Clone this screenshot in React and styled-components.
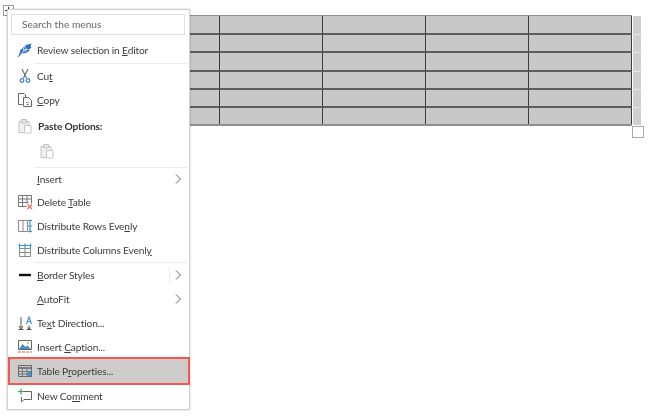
import React from 'react'
import styled, { createGlobalStyle } from 'styled-components'

const GlobalStyle = createGlobalStyle`
  html, body {
    margin: 0;
    padding: 0;
    background: #fff;
    width: 650px;
    height: 418px;
    overflow: hidden;
  }
  #root { height: 418px; }
`

const Page = styled.div`
  position: relative;
  width: 650px;
  height: 418px;
  padding: 15px 0 0 117px;
  box-sizing: border-box;
  font-family: Lato, Roboto, sans-serif;
  filter: blur(0.35px);
`

const TableArea = styled.div`
  display: flex;
  align-items: flex-start;
`

const Grid = styled.div`
  display: grid;
  grid-template-columns: repeat(5, 103px);
  grid-template-rows: 19px 18px 19px 18px 18px 16px;
  width: 515px;
  background: #c8c8c8;
  border: solid #8e8e8e;
  border-width: 1px 0 2px 0;
  box-sizing: border-box;
`

const Cell = styled.div`
  border-right: 1px solid #3c3c3c;
  border-bottom: ${p => (p.$last ? 'none' : '2px solid #5c5c5c')};
  box-sizing: border-box;
`

const EndMarks = styled.div`
  display: grid;
  grid-template-rows: 18px 17px 18px 17px 17px 17px;
  gap: 1px;
  margin: 1px 0 0 1px;
  background: #e6e6e6;
`

const EndMark = styled.div`
  width: 8px;
  background: #cfcfcf;
`

const ResizeHandle = styled.div`
  position: absolute;
  left: 632px;
  top: 126px;
  width: 10px;
  height: 10px;
  border: 1px solid #a8a8a8;
  background: #fff;
`

const MoveHandle = styled.div`
  position: absolute;
  left: 3px;
  top: 5px;
  width: 9px;
  height: 9px;
  border: 1px solid #9a9a9a;
  background: #fff;
  display: flex;
  align-items: center;
  justify-content: center;
`

const Menu = styled.div`
  position: absolute;
  left: 7px;
  top: 9px;
  width: 183px;
  height: 401px;
  box-sizing: border-box;
  background: #fff;
  border: 1px solid #d0d0d0;
  box-shadow: 0 0 2px rgba(0, 0, 0, 0.22);
  padding: 4px 1px 0 0;
  color: #3c3c3c;
  font-size: 10.2px;
  letter-spacing: -0.15px;
`

const Search = styled.div`
  height: 21px;
  margin: 0 3px 2px;
  padding: 0 0 2px 10px;
  box-sizing: border-box;
  display: flex;
  align-items: center;
  border: 1px solid #dedede;
  color: #666;
  letter-spacing: 0;
`

const Row = styled.div`
  height: ${p => p.$h || 24}px;
  display: grid;
  grid-template-columns: 29px 1fr 14px;
  align-items: center;
  box-sizing: border-box;
  ${p => p.$selected && `
    position: relative;
    height: 28px;
    margin: -2px 0 -1px 0;
    width: 182px;
    background: #cdcccb;
    border: 2px solid #f2594e;
    grid-template-columns: 27px 1fr 14px;
  `}
`

const IconSlot = styled.div`
  display: flex;
  justify-content: center;
  padding-left: ${p => (p.$selected ? 2 : 5)}px;
`

const Label = styled.span`
  white-space: nowrap;
  font-weight: ${p => (p.$bold ? 700 : 400)};
  padding-left: ${p => (p.$bold ? 1 : 0)}px;
  color: ${p => (p.$bold ? '#333' : 'inherit')};

  u {
    text-decoration-thickness: 1px;
    text-underline-offset: 1px;
  }
`

const ArrowCell = styled.div`
  position: relative;
  padding-left: 1px;

  ${p => p.$split && `
    &::before {
      content: '';
      position: absolute;
      left: -5px;
      top: -3px;
      width: 1px;
      height: 16px;
      background: #ececec;
    }
  `}
`

const Separator = styled.div`
  height: 1px;
  margin: ${p => p.$m || '0'};
  margin-left: 26px;
  background: #ececec;
`

const PasteRow = styled.div`
  height: 22px;
  padding-left: 31px;
  display: flex;
  align-items: center;
`

const Icon = ({ children, w = 16, h = 16 }) => (
  <svg width={w} height={h} viewBox={`0 0 ${w} ${h}`} fill="none">
    {children}
  </svg>
)

const ReviewIcon = () => (
  <Icon>
    <path d="M1.5 14 3.5 8 9 3 14.5 1.5 13.5 4.5 14.5 5 12 8 12.5 9 9 11 4.5 11.5Z" fill="#2f6fc4" />
    <path d="M1 15 9.5 6M6 9h4M7.5 7.5h4M8 6V4M6.5 8V6" stroke="#fff" strokeWidth=".7" />
    <path d="M1 15 4 11.5" stroke="#2f6fc4" />
  </Icon>
)

const CutIcon = () => (
  <Icon>
    <path d="M5 1 9.5 10M11 1 6.5 10" stroke="#666" strokeWidth="1.1" />
    <circle cx="5" cy="12.5" r="1.8" stroke="#3a86d0" strokeWidth="1.3" />
    <circle cx="11" cy="12.5" r="1.8" stroke="#3a86d0" strokeWidth="1.3" />
  </Icon>
)

const CopyIcon = () => (
  <Icon>
    <path d="M5.5 12.5H1.5V1.5H7L8.5 3V5" stroke="#666" />
    <path d="M6.5 5.5H11.5L14.5 8.5V14.5H6.5Z" stroke="#666" fill="#fff" />
    <path d="M9 10.5h3M9 12.5h3" stroke="#999" />
  </Icon>
)

const PasteIcon = ({ c = '#c4c4c4' }) => (
  <Icon>
    <path d="M2 3.5h10V14.5H2Z" stroke={c} fill="#f1f1f1" />
    <path d="M4.5 1.5h5V5h-5Z" stroke={c} fill="#e4e4e4" />
    <path d="M7.5 7.5h6.5v7.5H7.5Z" stroke={c} fill="#fff" />
  </Icon>
)

const DeleteTableIcon = () => (
  <Icon>
    <path d="M1.5 1.5h13v8M9.5 12.5h-8v-11M1.5 5h13M1.5 8.5h10M5.5 1.5v11M10 1.5v8" stroke="#777" />
    <path d="M10.5 10.5l4.5 4.5M15 10.5l-4.5 4.5" stroke="#ee6a60" strokeWidth="1.2" />
  </Icon>
)

const RowsIcon = () => (
  <Icon>
    <path d="M1.5 2.5h9v11h-9ZM6 2.5v11" stroke="#8a8a8a" />
    <path d="M13 1.5v13M11 2.5h4M11 8h4M11 13.5h4" stroke="#3a94d8" strokeWidth="1.2" />
  </Icon>
)

const ColumnsIcon = () => (
  <Icon>
    <path d="M2.5 6.5h11v8h-11ZM2.5 10.5h11M8 6.5v8" stroke="#8a8a8a" />
    <path d="M1.5 3.5h13M2.5 1.5v5M8 1.5v5M13.5 1.5v5" stroke="#3a94d8" strokeWidth="1.2" />
  </Icon>
)

const BorderIcon = () => (
  <Icon>
    <path d="M2 8h12" stroke="#111" strokeWidth="2.4" />
  </Icon>
)

const DirectionIcon = () => (
  <Icon>
    <path d="M4 2v11M2 11l2 3 2-3M1.5 14.5h5" stroke="#555" />
    <path d="M9.5 9 12 2 14.5 9M10.5 6.5h3" stroke="#3a94d8" strokeWidth="1.1" />
    <path d="M12 10.5v3M10.5 12.5l1.5 1.5 1.5-1.5M9.5 14.5h5" stroke="#555" />
  </Icon>
)

const CaptionIcon = () => (
  <Icon>
    <path d="M1.5 1.5h13v9h-13Z" stroke="#666" />
    <path d="M2 10 5.5 5 8.5 8 10.5 6.5 14 10Z" fill="#3d8fd0" />
    <circle cx="11" cy="4" r="1" fill="#e8a040" />
    <path d="M1 13h14" stroke="#e8584e" strokeDasharray="3 1" />
  </Icon>
)

const PropsIcon = () => (
  <Icon>
    <path d="M1.5 2.5h13v11h-13Z" stroke="#666" />
    <path d="M1.5 5h13" stroke="#666" strokeWidth="1.6" />
    <path d="M1.5 8.5h13M1.5 11h13M5.5 5v8.5M10 5v8.5" stroke="#777" />
    <path d="M10.5 8.5h3.5v4.5h-3.5Z" fill="#3a94d8" />
  </Icon>
)

const CommentIcon = () => (
  <Icon>
    <path d="M6.5 3.5h8v8H7L4.5 14v-5" stroke="#666" fill="none" />
    <path d="M1 3.5h6M4 .5v6" stroke="#3aa655" strokeWidth="1.2" />
  </Icon>
)

const Arrow = () => (
  <svg width="7" height="10" viewBox="0 0 7 10" fill="none" style={{ display: 'block' }}>
    <path d="M1 .5 5.5 5 1 9.5" stroke="#666" />
  </svg>
)

const MenuRow = ({ icon, children, more, split, selected, h, bold }) => (
  <Row $selected={selected} $h={h}>
    <IconSlot $selected={selected}>{icon}</IconSlot>
    <Label $bold={bold}>{children}</Label>
    {more && (
      <ArrowCell $split={split}>
        <Arrow />
      </ArrowCell>
    )}
  </Row>
)

const ROW_COUNT = 6

export default function App() {
  return (
    <Page>
      <GlobalStyle />
      <TableArea>
        <Grid>
          {Array.from({ length: ROW_COUNT * 5 }, (_, i) => (
            <Cell key={i} $last={i >= (ROW_COUNT - 1) * 5} />
          ))}
        </Grid>
        <EndMarks>
          {Array.from({ length: ROW_COUNT }, (_, i) => (
            <EndMark key={i} />
          ))}
        </EndMarks>
      </TableArea>
      <ResizeHandle />
      <MoveHandle>
        <svg width="7" height="7" viewBox="0 0 7 7" fill="none">
          <path d="M3.5 0v7M0 3.5h7" stroke="#333" />
        </svg>
      </MoveHandle>

      <Menu>
        <Search>Search the menus</Search>
        <MenuRow icon={<ReviewIcon />} h={26}>
          Review selection in <u>E</u>ditor
        </MenuRow>
        <Separator />
        <MenuRow icon={<CutIcon />}>
          Cu<u>t</u>
        </MenuRow>
        <MenuRow icon={<CopyIcon />}>
          <u>C</u>opy
        </MenuRow>
        <MenuRow icon={<PasteIcon />} h={28} bold>
          Paste Options:
        </MenuRow>
        <PasteRow>
          <PasteIcon />
        </PasteRow>
        <Separator $m="5px 0 0" />
        <MenuRow more h={22}>
          <u>I</u>nsert
        </MenuRow>
        <MenuRow icon={<DeleteTableIcon />}>
          Delete <u>T</u>able
        </MenuRow>
        <MenuRow icon={<RowsIcon />}>
          Distribute Rows Eve<u>n</u>ly
        </MenuRow>
        <MenuRow icon={<ColumnsIcon />}>
          Distribute Columns Evenl<u>y</u>
        </MenuRow>
        <Separator />
        <MenuRow icon={<BorderIcon />} more split>
          <u>B</u>order Styles
        </MenuRow>
        <MenuRow more>
          <u>A</u>utoFit
        </MenuRow>
        <MenuRow icon={<DirectionIcon />}>
          Te<u>x</u>t Direction...
        </MenuRow>
        <MenuRow icon={<CaptionIcon />}>
          Insert <u>C</u>aption...
        </MenuRow>
        <MenuRow icon={<PropsIcon />} selected>
          Table P<u>r</u>operties...
        </MenuRow>
        <MenuRow icon={<CommentIcon />}>
          New Co<u>m</u>ment
        </MenuRow>
      </Menu>
    </Page>
  )
}
